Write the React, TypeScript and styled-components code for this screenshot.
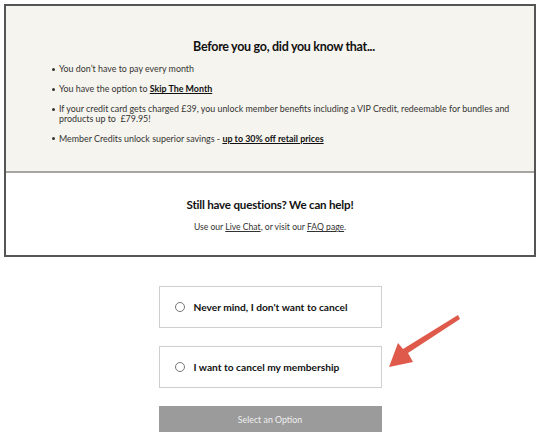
import React from "react";
import styled, { createGlobalStyle } from "styled-components";

const Global = createGlobalStyle`
  html, body { margin: 0; padding: 0; background: #fff; }
  body { font-family: Lato, "Noto Sans", sans-serif; color: #222; }
  * { box-sizing: border-box; }
`;

const Page = styled.div`
  position: relative;
  width: 539px;
  height: 437px;
  padding: 4px 3px 0 4px;
`;

const Card = styled.div`
  border: 2px solid #555;
  width: 532px;
`;

const InfoSection = styled.section`
  background: #f6f4ee;
  border-bottom: 2px solid #a8a6a2;
  padding: 33px 8px 28px 46px;
`;

const Heading = styled.h2`
  margin: 0 0 10px;
  text-align: center;
  font-size: 12.5px;
  letter-spacing: -0.3px;
  font-weight: 700;
  color: #111;
  padding-right: 10px;
`;

const List = styled.ul`
  margin: 0;
  padding: 0;
  list-style: none;
`;

const Item = styled.li`
  position: relative;
  padding-left: 7px;
  font-size: 8.9px;
  line-height: 9.5px;
  color: #333;
  margin-bottom: 10.5px;
  &:last-child { margin-bottom: 0; }
  &::before {
    content: "";
    position: absolute;
    left: 0;
    top: 3.5px;
    width: 3px;
    height: 3px;
    border-radius: 50%;
    background: #333;
  }
`;

const StrongLink = styled.a`
  font-weight: 700;
  color: #111;
  text-decoration: underline;
`;

const HelpSection = styled.section`
  padding: 25px 0 23px;
  text-align: center;
`;

const HelpTitle = styled.h3`
  margin: 0 0 11px;
  font-size: 11.6px;
  letter-spacing: -0.2px;
  font-weight: 700;
  color: #111;
`;

const HelpText = styled.p`
  margin: 0;
  font-size: 8.6px;
  color: #333;
`;

const PlainLink = styled.a`
  color: #333;
  text-decoration: underline;
`;

const Options = styled.div`
  display: flex;
  flex-direction: column;
  align-items: center;
  gap: 18px;
  margin-top: 29px;
`;

const Option = styled.label`
  width: 223px;
  height: 42px;
  border: 1px solid #cfcfcf;
  display: flex;
  align-items: center;
  padding-left: 15px;
  gap: 9px;
  font-size: 10.2px;
  font-weight: 700;
  color: #111;
  background: #fff;
`;

const Radio = styled.span`
  width: 10px;
  height: 10px;
  border-radius: 50%;
  border: 1px solid #777;
  flex: none;
`;

const Submit = styled.button`
  width: 223px;
  height: 26px;
  border: none;
  background: #9b9b9b;
  color: #efefef;
  font-family: Lato, "Noto Sans", sans-serif;
  font-size: 8.8px;
`;

const Arrow = styled.svg`
  position: absolute;
  left: 385px;
  top: 312px;
`;

export default function App() {
  return (
    <>
      <Global />
      <Page>
        <Card>
          <InfoSection>
            <Heading>Before you go, did you know that...</Heading>
            <List>
              <Item>You don’t have to pay every month</Item>
              <Item>
                You have the option to <StrongLink>Skip The Month</StrongLink>
              </Item>
              <Item>
                If your credit card gets charged £39, you unlock member benefits including a VIP Credit, redeemable for bundles and products up to &nbsp;£79.95!
              </Item>
              <Item>
                Member Credits unlock superior savings - <StrongLink>up to 30% off retail prices</StrongLink>
              </Item>
            </List>
          </InfoSection>
          <HelpSection>
            <HelpTitle>Still have questions? We can help!</HelpTitle>
            <HelpText>
              Use our <PlainLink>Live Chat</PlainLink>, or visit our <PlainLink>FAQ page</PlainLink>.
            </HelpText>
          </HelpSection>
        </Card>
        <Options>
          <Option>
            <Radio />
            Never mind, I don't want to cancel
          </Option>
          <Option>
            <Radio />
            I want to cancel my membership
          </Option>
          <Submit>Select an Option</Submit>
        </Options>
        <Arrow width="80" height="60" viewBox="0 0 80 60">
          <polygon
            points="73,3 75,7 23,41 28,50 4,55 13,31 18,37"
            fill="#e05a4b"
          />
        </Arrow>
      </Page>
    </>
  );
}
